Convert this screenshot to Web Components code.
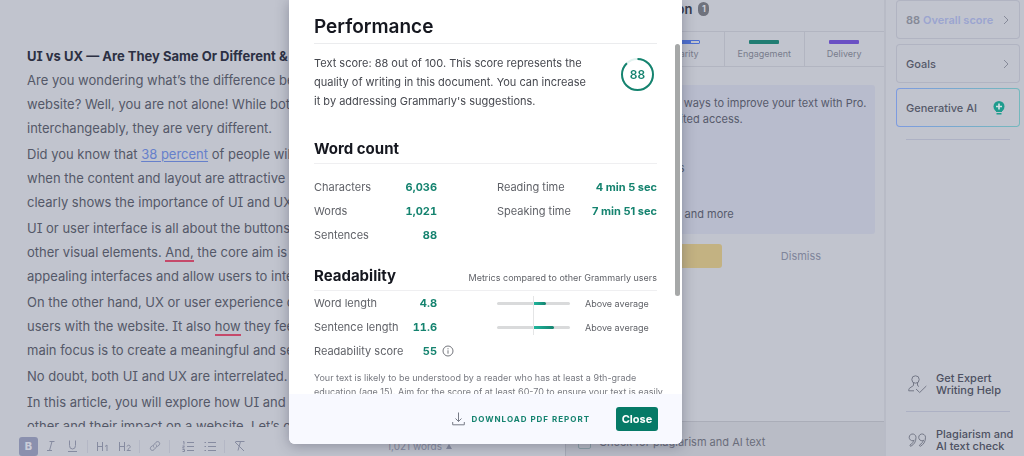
<!DOCTYPE html>
<html lang="en">
<head>
<meta charset="utf-8">
<title>UI vs UX</title>
<style>
  html, body { height: 100%; }
  body {
    margin: 0;
    overflow: hidden;
    background: #c1c4ce;
    color: #565a6b;
    font-family: Inter, "Open Sans", sans-serif;
    font-size: 11px;
    --edge: #b2b5c1;
    --green: #15836f;
  }
</style>
</head>
<body>
<writing-app></writing-app>

<script>
const define = (name, html, setup) => {
  const template = document.createElement('template');
  template.innerHTML = html;
  customElements.define(name, class extends HTMLElement {
    constructor() {
      super();
      this.attachShadow({ mode: 'open' }).append(template.content.cloneNode(true));
    }
    connectedCallback() { if (setup) setup(this, this.shadowRoot); }
  });
};

define('doc-editor', `
  <style>
    :host { display: flex; flex-direction: column; min-width: 0; min-height: 0; }
    article {
      flex: 1; min-height: 0; overflow: hidden; padding: 44px 0 0 27px;
      font-size: 13px; line-height: 24px; white-space: nowrap; color: #545868;
      font-feature-settings: "cv08";
    }
    h1 { margin: 0; font-size: 13px; line-height: 24px; font-weight: 700; color: #2c3043; }
    p { margin: 0 0 2px; }
    a { color: #6680cb; text-underline-offset: 2px; }
    mark { background: none; color: inherit; border-bottom: 2px solid #c5496a; }
  </style>
  <article>
    <h1>UI vs UX — Are They Same Or Different &amp;</h1>
    <p>Are you wondering what’s the difference be<br>website? Well, you are not alone! While both<br>interchangeably, they are very different.</p>
    <p>Did you know that <a href="#">38 percent</a> of people will<br>when the content and layout are attractive<br>clearly shows the importance of UI and UX</p>
    <p>UI or user interface is all about the buttons<br>other visual elements. <mark>And,</mark> the core aim is<br>appealing interfaces and allow users to inte</p>
    <p>On the other hand, UX or user experience of<br>users with the website. It also <mark>how</mark> they feel<br>main focus is to create a meaningful and se</p>
    <p>No doubt, both UI and UX are interrelated.</p>
    <p>In this article, you will explore how UI and<br>other and their impact on a website. Let’s c</p>
  </article>
  <format-bar></format-bar>
`);

define('format-bar', `
  <style>
    :host { display: flex; align-items: center; height: 29px; padding-top: 9px; box-sizing: border-box; color: #868ba0; }
    .tools { display: flex; align-items: center; flex: 1; padding-left: 19px; box-sizing: border-box; }
    button { width: 19px; height: 19px; margin: 0; padding: 0; border: 0; border-radius: 3px; background: none;
      color: inherit; font: 400 11px/19px Inter, sans-serif; display: grid; place-items: center; }
    button.on { background: #8a90ae; color: #c9ccd8; font-weight: 800; }
    .gap { margin-left: 3px; }
    i { width: 1px; height: 13px; background: #b4b7c5; margin: 0 5px; }
    svg { display: block; fill: none; stroke: currentColor; }
    .words { flex: none; width: 178px; font-size: 10px; }
    .words button { width: auto; display: flex; align-items: center; gap: 4px; font-size: 10px; }
  </style>
  <div class="tools" role="toolbar" aria-label="Formatting">
    <button class="on" aria-label="Bold">B</button>
    <button class="gap" aria-label="Italic"><svg width="10" height="12"><path d="M3.500 1.500h5M1 10.500h5M6 1.500l-2.500 9"/></svg></button>
    <button class="gap" aria-label="Underline"><svg width="11" height="13"><path d="M2.500 0.500v5a3 3.500 0 0 0 6 0v-5M1 11.500h9"/></svg></button>
    <i></i>
    <button aria-label="Heading 1"><svg width="13" height="12"><path d="M1.500 2v9M6.500 2v9M1.500 6.500h5M9 6.500l2-1.500v6"/></svg></button>
    <button class="gap" aria-label="Heading 2"><svg width="14" height="12"><path d="M1.500 2v9M6.500 2v9M1.500 6.500h5M9 6.500c.5-2 3.500-1.500 3.200.3c-.2 1.200-2 2.200-3.200 3.700h3.700"/></svg></button>
    <i></i>
    <button aria-label="Link"><svg width="12" height="12"><path d="M5 7.500C3.800 6.300 4.300 5.200 5.200 4.300L7 2.300c2-2 5 .6 3 2.800L8.500 6.600M7 4.500c1.200 1.200.7 2.300-.2 3.200L5 9.700c-2 2-5-.6-3-2.800l1.500-1.500"/></svg></button>
    <i></i>
    <button class="gap" aria-label="Numbered list"><svg width="12" height="11"><path d="M5 1.500h7M5 5.500h7M5 9.500h7M1 1l1-.5v3M.5 5h2l-2 2h2M.5 8.500h2v2h-2"/></svg></button>
    <button class="gap" aria-label="Bulleted list"><svg width="12" height="11"><path d="M4 1.500h8M4 5.500h8M4 9.500h8M.5 1.500h1.500M.5 5.500h1.500M.5 9.500h1.500"/></svg></button>
    <i></i>
    <button aria-label="Clear formatting"><svg width="12" height="12"><path d="M1.500 1.500h9M6.500 1.500l-2.500 9M1 2l9 9"/></svg></button>
  </div>
  <div class="words"><button>1,021 words <svg width="6" height="5"><path d="M0 5l3-5l3 5z" style="fill:currentColor;stroke:none"/></svg></button></div>
`);

define('category-tab', `
  <style>
    :host { display: flex; flex-direction: column; align-items: center; gap: 3px; padding-top: 8px;
      border-right: 1px solid var(--edge); font-size: 9px; line-height: 14px; color: #787c8c; }
    :host(:last-child) { border-right: 0; }
    .bar { width: 30px; height: 4px; border-radius: 1px; box-sizing: border-box; background: var(--tone); }
    :host([partial]) .bar { border: 1px solid var(--tone); background: linear-gradient(90deg, var(--tone) 70%, transparent 70%); }
  </style>
  <span class="bar"></span><slot></slot>
`);

define('suggestion-panel', `
  <style>
    :host { display: flex; flex-direction: column; min-height: 0; border-left: 1px solid #a7aab6; box-sizing: border-box; }
    header { display: flex; align-items: center; height: 32px; padding: 0 0 13px 55px; box-sizing: border-box; gap: 6px; border-bottom: 1px solid var(--edge); }
    h2 { margin: 0; font-size: 13px; line-height: 16px; font-weight: 600; color: #363a4b; }
    .count { min-width: 11px; text-align: center; border-radius: 6px; background: #6f727d; color: #c9ccd5; font-size: 9px; line-height: 14px; font-weight: 700; }
    nav { display: grid; grid-template-columns: repeat(4, 1fr); height: 35px; box-sizing: border-box; border-bottom: 1px solid var(--edge); }
    section { margin: 18px 9px 0 12px; height: 149px; box-sizing: border-box; padding: 10px 9px; background: #b8bccd; border-radius: 3px; line-height: 16px; }
    p, ul { margin: 0; padding: 0; list-style: none; }
    p { padding-left: 14px; white-space: nowrap; }
    ul { margin-top: 10px; display: grid; gap: 7px; padding-left: 33px; }
    .actions { display: grid; grid-template-columns: 144px 1fr; gap: 5px; margin: 10px 9px 0 12px; height: 24px; }
    .actions button { border: 0; background: none; font: 400 11px/24px Inter, sans-serif; color: #7f859b; padding: 0; }
    .actions .go { background: #c3b282; border-radius: 3px; }
    footer { margin-top: auto; height: 35px; box-sizing: border-box; border-top: 1px solid #aaadb8; background: #b9bcc6; padding: 6px 0 0 12px; }
    label { display: flex; align-items: center; gap: 8px; height: 28px; color: #6a6d7b; }
    input { appearance: none; margin: 0; width: 13px; height: 13px; border: 1px solid #8da0a8; border-radius: 2px; }
  </style>
  <header><h2>Suggestion</h2><span class="count">1</span></header>
  <nav>
    <category-tab style="--tone:#b35a70">Correct</category-tab>
    <category-tab partial style="--tone:#4d6fd0">Clarity</category-tab>
    <category-tab style="--tone:#217d73">Engagement</category-tab>
    <category-tab style="--tone:#6a50c4">Delivery</category-tab>
  </nav>
  <section>
    <p>There are more ways to improve your text with Pro.<br>Pro gives unlimited access.</p>
    <ul><li>Clarity</li><li>Suggestions</li><li>Tone</li><li>Vocabulary, and more</li></ul>
  </section>
  <div class="actions"><button class="go" aria-label="Upgrade"></button><button>Dismiss</button></div>
  <footer><label><input type="checkbox">Check for plagiarism and AI text</label></footer>
`);

define('rail-card', `
  <style>
    :host { display: block; border-radius: 4px; background: #b1b4c2; padding: 1px; }
    :host([accent]) { background: linear-gradient(90deg, #7d9be0, #74b8bd); }
    button { display: flex; align-items: center; justify-content: space-between; width: 100%; height: 37px; margin: 0; padding: 0 10px 0 9px;
      border: 0; border-radius: 3px; background: #c1c4ce; color: #555969; font: 500 11px/16px Inter, sans-serif; text-align: left; }
    svg { flex: none; }
  </style>
  <button><span><slot></slot></span><slot name="icon"><svg width="6" height="10" fill="none" stroke="#868a99"><path d="M1 1l4 4l-4 4"/></svg></slot></button>
`);

define('rail-link', `
  <style>
    :host { display: block; }
    a { display: flex; align-items: center; gap: 9px; color: #4d5162; text-decoration: none; font-size: 11px; line-height: 12px; font-weight: 500; white-space: nowrap; }
  </style>
  <a href="#"><slot name="icon"></slot><span><slot></slot></span></a>
`);

define('tool-rail', `
  <style>
    :host { display: flex; flex-direction: column; box-sizing: border-box; border-left: 2px solid #b8bbc6; padding: 0 4px 4px 10px; }
    .cards { display: grid; gap: 5px; }
    hr { width: auto; align-self: stretch; margin: 12px 10px 0; border: 0; border-top: 1px solid #adb1c4; }
    .links { margin-top: auto; padding-left: 12px; }
    .links hr { margin: 15px 10px 16px -2px; }
    b { font-weight: 600; color: #9ba5d0; }
    .num { color: #858997; font-weight: 600; }
    svg { flex: none; }
  </style>
  <div class="cards">
    <rail-card><span class="num">88</span> <b>Overall score</b></rail-card>
    <rail-card>Goals</rail-card>
    <rail-card accent>Generative AI
      <svg slot="icon" width="12" height="14" style="margin-right:4px"><circle cx="6" cy="5.500" r="5.500" fill="#1e9c8e"/><path d="M3 9h6v2H3zM3.500 12h5v1.500h-5z" fill="#1e9c8e"/><path d="M6 2.500v6M3 5.500h6" stroke="#d3dfe3" stroke-width="1.700"/></svg>
    </rail-card>
  </div>
  <hr>
  <div class="links">
    <rail-link><svg slot="icon" width="19" height="19" fill="none" stroke="#747887"><circle cx="7.500" cy="4.500" r="3.700"/><path d="M5.500 8v2.500L1.500 13.200Q.7 14 .7 15.800H6M9.500 8v2.500l1.500 1M8 14l3.700 3.500L18.300 11"/></svg>Get Expert<br>Writing Help</rail-link>
    <hr>
    <rail-link><svg slot="icon" width="19" height="14" fill="none" stroke="#747887"><path d="M6.500 7.200A3.400 3.400 0 1 1 8 4.200C8 9 6 11.500 2.800 13.300Q1.500 12.800 2 12C4.500 10.500 5.500 9 5.500 7.300M16 7.200A3.400 3.400 0 1 1 17.500 4.200C17.500 9 15.500 11.500 12.300 13.300Q11 12.800 11.500 12C14 10.500 15 9 15 7.300"/></svg>Plagiarism and<br>AI text check</rail-link>
  </div>
`);

define('score-ring', `
  <style>
    :host { display: grid; place-items: center; width: 35px; height: 35px; flex: none; color: var(--green); font-size: 12px; font-weight: 600; }
    svg, span { grid-area: 1 / 1; }
  </style>
  <svg width="35" height="35" fill="none" stroke-width="2"><circle cx="17.500" cy="17.500" r="15.500" stroke="#e3f3f0"/><circle cx="17.500" cy="17.500" r="15.500" stroke="#15836f" pathLength="100" stroke-dasharray="88 12" transform="rotate(-90 17.500 17.500)"/></svg>
  <span><slot></slot></span>
`);

define('stat-row', `
  <style>
    :host { display: flex; justify-content: space-between; align-items: center; height: 24px; font-size: 11px; color: #606268; white-space: nowrap; }
    b { color: var(--green); font-weight: 700; position: relative; }
    :host([tabular]) b { font-variant-numeric: tabular-nums; }
    ::slotted(svg) { position: absolute; left: calc(100% + 5px); top: 1px; }
  </style>
  <span class="l"></span><b><span class="v"></span><slot></slot></b>
`, (el, root) => {
  root.querySelector('.l').textContent = el.getAttribute('label');
  root.querySelector('.v').textContent = el.getAttribute('value');
});

define('range-meter', `
  <style>
    :host { display: grid; grid-template-columns: 73px 1fr; gap: 15px; align-items: center; height: 24px; font-size: 9px; color: #606268; }
    .track { display: flex; height: 3px; border-radius: 2px; background: #d9dadb; }
    .low { width: 36px; border-right: 1px solid #e4e5e6; margin: -6px 0 -14px; }
    :host([last]) .low { margin: -14px 0 -6px; }
    .fill { width: var(--fill); background: linear-gradient(90deg, #1fb59c, #15836f); border-radius: 0 2px 2px 0; }
  </style>
  <span class="track"><span class="low"></span><span class="fill"></span></span><span><slot></slot></span>
`);

define('stats-dialog', `
  <style>
    :host { position: fixed; inset: 0; display: flex; justify-content: center; padding: 0 53px 12px 0; box-sizing: border-box; }
    .box { position: relative; width: 393px; display: flex; flex-direction: column; overflow: hidden; background: #fff; border-radius: 0 0 6px 6px; box-shadow: 0 2px 14px rgba(40, 44, 66, .35); }
    .body { flex: 1; min-height: 0; overflow: hidden; padding: 0 25px; }
    h1, h2 { margin: 0; color: #15171f; }
    h1 { font-size: 19px; font-weight: 600; line-height: 24px; padding: 15px 0 4px; border-bottom: 1px solid #ebecee; }
    .head { display: flex; align-items: center; justify-content: space-between; padding-bottom: 2px; border-bottom: 1px solid #efeff1; }
    h2 { font-size: 15px; font-weight: 700; line-height: 24px; }
    .head span { font-size: 9px; line-height: 12px; padding-top: 4px; color: #606268; }
    .score { display: flex; justify-content: space-between; padding: 10px 2px 26px 0; }
    .score p { margin: 0; font-size: 11px; line-height: 19px; color: #46484f; }
    .score score-ring { margin-top: 3px; }
    .cols { display: grid; grid-template-columns: 123px 160px; justify-content: space-between; }
    .counts { padding: 11px 0 17px; }
    .note { margin: 8px -10px 0 0; font-size: 9px; line-height: 14px; color: #777980; white-space: nowrap; }
    .thumb { position: absolute; right: 2px; top: 44px; width: 5px; height: 252px; border-radius: 3px; background: #a6a8a8; }
    footer { display: flex; align-items: center; justify-content: flex-end; gap: 26px; height: 50px; padding-right: 24px; background: #f8f9ff; }
    button { margin: 0; border: 0; padding: 0; background: none; font-family: inherit; color: var(--green); }
    .pdf { display: flex; align-items: center; gap: 6px; font-size: 8px; font-weight: 700; letter-spacing: 1px; }
    .close { width: 42px; height: 24px; border-radius: 3px; background: #067a67; color: #fff; font-size: 11px; font-weight: 700; }
  </style>
  <div class="box" role="dialog" aria-label="Performance">
    <div class="body">
      <h1>Performance</h1>
      <div class="score">
        <p>Text score: 88 out of 100. This score represents the<br>quality of writing in this document. You can increase<br>it by addressing Grammarly's suggestions.</p>
        <score-ring>88</score-ring>
      </div>
      <div class="head"><h2>Word count</h2></div>
      <div class="cols counts">
        <div>
          <stat-row tabular label="Characters" value="6,036"></stat-row>
          <stat-row tabular label="Words" value="1,021"></stat-row>
          <stat-row tabular label="Sentences" value="88"></stat-row>
        </div>
        <div>
          <stat-row label="Reading time" value="4 min 5 sec"></stat-row>
          <stat-row label="Speaking time" value="7 min 51 sec"></stat-row>
        </div>
      </div>
      <div class="head"><h2>Readability</h2><span>Metrics compared to other Grammarly users</span></div>
      <div class="cols">
        <div>
          <stat-row tabular label="Word length" value="4.8"></stat-row>
          <stat-row tabular label="Sentence length" value="11.6"></stat-row>
          <stat-row tabular label="Readability score" value="55"><svg width="12" height="12" fill="none" stroke="#74767c"><circle cx="6" cy="6" r="5"/><path d="M6 5.300v3.400M6 3.200v1.100"/></svg></stat-row>
        </div>
        <div>
          <range-meter style="--fill:12px">Above average</range-meter>
          <range-meter last style="--fill:20px">Above average</range-meter>
        </div>
      </div>
      <p class="note">Your text is likely to be understood by a reader who has at least a 9th-grade<br>education (age 15). Aim for the score of at least 60-70 to ensure your text is easily</p>
    </div>
    <div class="thumb"></div>
    <footer>
      <button class="pdf"><svg width="13" height="14" fill="none" stroke="#777b86"><path d="M6.500 0.500v9M3.500 6.500l3 3l3-3M.7 10v2.800h11.600V10"/></svg>DOWNLOAD PDF REPORT</button>
      <button class="close">Close</button>
    </footer>
  </div>
`);

define('writing-app', `
  <style>
    :host { display: grid; grid-template-columns: minmax(0, 1fr) 319px 140px; grid-template-rows: minmax(0, 1fr); height: 100vh; }
  </style>
  <doc-editor></doc-editor>
  <suggestion-panel></suggestion-panel>
  <tool-rail></tool-rail>
  <stats-dialog></stats-dialog>
`);
</script>
</body>
</html>
